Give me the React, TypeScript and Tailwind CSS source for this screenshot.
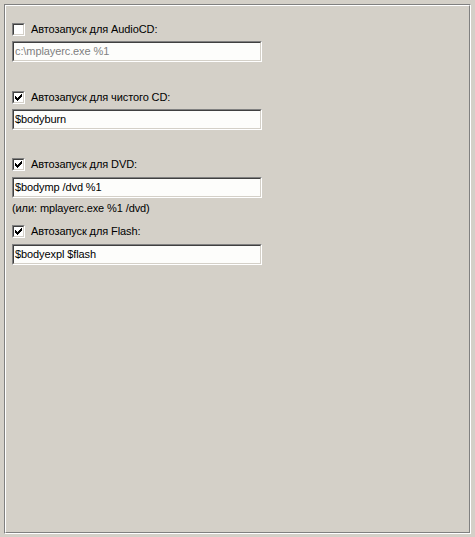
import React from "react";

function Check({ checked }: { checked: boolean }) {
  return (
    <div className="w-[13px] h-[13px] border border-t-[#808080] border-l-[#808080] border-b-white border-r-white shrink-0">
      <div className="w-full h-full border border-t-[#404040] border-l-[#404040] border-b-[#d4d0c8] border-r-[#d4d0c8] bg-white relative">
        {checked && (
          <svg width="7" height="7" viewBox="0 0 7 7" className="absolute left-[1px] top-[1px]" shapeRendering="crispEdges">
            <path d="M0 2h1v3h-1z M1 3h1v3h-1z M2 4h1v3h-1z M3 3h1v3h-1z M4 2h1v3h-1z M5 1h1v3h-1z M6 0h1v3h-1z" fill="#000" />
          </svg>
        )}
      </div>
    </div>
  );
}

function Field({ value, disabled }: { value: string; disabled?: boolean }) {
  return (
    <div className="w-[250px] h-[21px] border border-t-[#808080] border-l-[#808080] border-b-white border-r-white">
      <div className="w-full h-full border border-t-[#404040] border-l-[#404040] border-b-[#d4d0c8] border-r-[#d4d0c8] bg-[#fdfdfb] flex items-center pl-[1px]">
        <span className={`text-[11px] leading-[13px] tracking-[-0.1px] ${disabled ? "text-[#808080]" : "text-black"}`}>{value}</span>
      </div>
    </div>
  );
}

function Row({ label, checked }: { label: string; checked: boolean }) {
  return (
    <div className="flex items-center gap-[6px] h-[13px]">
      <Check checked={checked} />
      <span className="text-[11px] leading-[13px] tracking-[-0.1px] text-black">{label}</span>
    </div>
  );
}

export default function App() {
  return (
    <div
      className="w-[475px] h-[537px] bg-[#d4d0c8] pt-[4px] pl-[4px]"
      style={{ fontFamily: '"Liberation Sans", Arial, sans-serif' }}
    >
      <div className="w-[467px] h-[530px] border border-t-[#808080] border-l-[#808080] border-b-white border-r-white">
        <div className="w-full h-full border border-t-white border-l-white border-b-[#808080] border-r-[#808080] pl-[6px] pt-[17px] flex flex-col">
          <Row label="Автозапуск для AudioCD:" checked={false} />
          <div className="mt-[5px]">
            <Field value="c:\mplayerc.exe %1" disabled />
          </div>
          <div className="mt-[29px]">
            <Row label="Автозапуск для чистого CD:" checked />
          </div>
          <div className="mt-[5px]">
            <Field value="$bodyburn" />
          </div>
          <div className="mt-[28px]">
            <Row label="Автозапуск для DVD:" checked />
          </div>
          <div className="mt-[6px]">
            <Field value="$bodymp /dvd %1" />
          </div>
          <div className="mt-[4px] text-[11px] leading-[13px] tracking-[-0.1px] text-black">(или: mplayerc.exe %1 /dvd)</div>
          <div className="mt-[10px]">
            <Row label="Автозапуск для Flash:" checked />
          </div>
          <div className="mt-[6px]">
            <Field value="$bodyexpl $flash" />
          </div>
        </div>
      </div>
    </div>
  );
}
